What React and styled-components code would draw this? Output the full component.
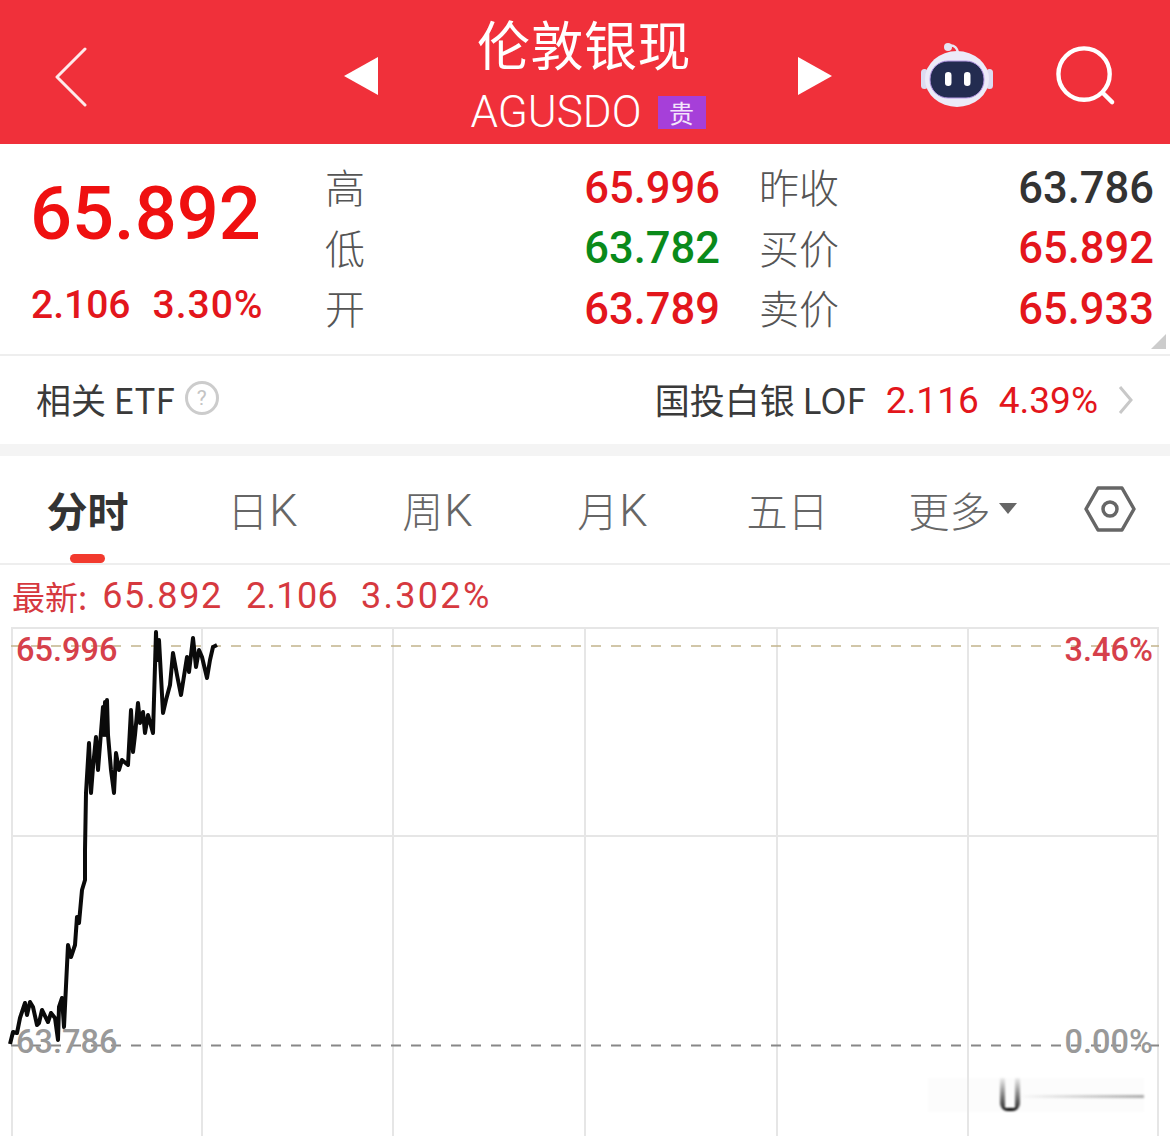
import React from 'react';
import styled, { createGlobalStyle } from 'styled-components';

const CJK = '"Noto Sans CJK SC", sans-serif';
const NUM = 'Roboto, "Noto Sans CJK SC", sans-serif';

const stats = [
  { label: '高', value: '65.996', color: '#e3161c', label2: '昨收', value2: '63.786', color2: '#333' },
  { label: '低', value: '63.782', color: '#0a8a1a', label2: '买价', value2: '65.892', color2: '#e3161c' },
  { label: '开', value: '63.789', color: '#e3161c', label2: '卖价', value2: '65.933', color2: '#e3161c' },
];

const priceLine =
  'M10 1044 L13 1032 L17 1033 L20 1018 L25 1003 L27 1015 L30 1002 L33 1007 L37 1025 L39 1023 L42 1010 L48 1022 L51 1013 L55 1018 L58 1040 L59 1007 L62 998 L64 1027 L68 945 L71 957 L75 945 L77 917 L79 923 L82 890 L85 880 L85 850 L86 793 L89 743 L91 793 L93 767 L96 737 L98 770 L103 707 L104 735 L105 702 L106 735 L107 700 L108 735 L111 770 L114 793 L116 753 L119 770 L122 760 L128 765 L131 710 L133 752 L135 735 L138 703 L140 723 L143 712 L145 733 L148 715 L150 722 L153 733 L156 632 L157 660 L159 640 L163 713 L166 700 L170 685 L173 653 L177 675 L181 695 L187 657 L189 672 L193 638 L196 667 L199 650 L202 657 L207 678 L210 660 L213 647 L217 645';

const App = () => (
  <Page>
    <GlobalStyle />
    <Header>
      <BackIcon viewBox="0 0 34 60">
        <path d="M31 2 L3 30 L31 58" fill="none" stroke="#fff" strokeWidth="3" strokeLinecap="round" strokeLinejoin="round" opacity="0.9" />
      </BackIcon>
      <Triangle viewBox="0 0 34 38">
        <path d="M0 19 L34 0 L34 38 Z" fill="#fff" />
      </Triangle>
      <TitleBlock>
        <Title>伦敦银现</Title>
        <SubRow>
          <Code>AGUSDO</Code>
          <Badge>贵</Badge>
        </SubRow>
      </TitleBlock>
      <Triangle viewBox="0 0 34 38">
        <path d="M34 19 L0 0 L0 38 Z" fill="#fff" />
      </Triangle>
      <RobotIcon viewBox="0 0 72 66">
        <path d="M27 4 C33 2 37 6 37 13" fill="none" stroke="#e9e6f4" strokeWidth="2.5" />
        <circle cx="27" cy="5" r="4" fill="#e6e3f2" />
        <rect x="0" y="27" width="7" height="20" rx="3.5" fill="#dcdcf0" />
        <rect x="65" y="27" width="7" height="20" rx="3.5" fill="#dcdcf0" />
        <ellipse cx="36" cy="37" rx="32" ry="28" fill="#ecebf8" />
        <rect x="9" y="19" width="54" height="37" rx="18" fill="#232c50" stroke="#b79ae6" strokeWidth="1" />
        <rect x="24" y="30" width="6.5" height="14" rx="3.2" fill="#fff" />
        <rect x="43" y="30" width="6.5" height="14" rx="3.2" fill="#fff" />
      </RobotIcon>
      <SearchIcon viewBox="0 0 62 62">
        <circle cx="29" cy="29" r="26.5" fill="none" stroke="#fff" strokeWidth="4.5" />
        <path d="M49 49 L58 58" stroke="#fff" strokeWidth="4.5" strokeLinecap="round" />
      </SearchIcon>
    </Header>

    <Quote>
      <PriceBox>
        <Price>65.892</Price>
        <Change>
          <span>2.106</span>
          <Spaced spacing={1}>3.30%</Spaced>
        </Change>
      </PriceBox>
      <StatGrid>
        {stats.map(s => (
          <React.Fragment key={s.label}>
            <StatLabel>{s.label}</StatLabel>
            <StatValue color={s.color}>{s.value}</StatValue>
            <StatLabel>{s.label2}</StatLabel>
            <StatValue color={s.color2}>{s.value2}</StatValue>
          </React.Fragment>
        ))}
      </StatGrid>
      <Corner />
    </Quote>

    <EtfRow>
      <EtfTitle>相关 ETF</EtfTitle>
      <Help>?</Help>
      <EtfName>国投白银 LOF</EtfName>
      <EtfNum>2.116</EtfNum>
      <EtfNum>4.39%</EtfNum>
      <EtfArrow viewBox="0 0 16 30">
        <path d="M2 2 L13 15 L2 28" fill="none" stroke="#c8c8c8" strokeWidth="3" />
      </EtfArrow>
    </EtfRow>

    <Band />

    <Tabs>
      <Tab active>
        分时
        <TabMark />
      </Tab>
      <Tab>日<KLetter>K</KLetter></Tab>
      <Tab>周<KLetter>K</KLetter></Tab>
      <Tab>月<KLetter>K</KLetter></Tab>
      <Tab>五日</Tab>
      <Tab>
        更多
        <MoreCaret />
      </Tab>
      <Gear viewBox="0 0 52 46">
        <path d="M14 2 H38 L50 23 L38 44 H14 L2 23 Z" fill="none" stroke="#666" strokeWidth="3.5" strokeLinejoin="round" />
        <circle cx="26" cy="23" r="7" fill="none" stroke="#666" strokeWidth="3.5" />
      </Gear>
    </Tabs>

    <Latest>
      <LatestTag>最新:</LatestTag>
      <Spaced spacing={1.7}>65.892</Spaced>
      <Spaced spacing={0.3}>2.106</Spaced>
      <Spaced spacing={2.3}>3.302%</Spaced>
    </Latest>

    <Chart>
      <svg width="1170" height="509" viewBox="0 627 1170 509">
        <g stroke="#e6e6e6" strokeWidth="2" fill="none">
          <path d="M11 628 H1159 M11 836 H1159" />
          <path d="M12 627 V1136 M202 627 V1136 M393 627 V1136 M585 627 V1136 M777 627 V1136 M968 627 V1136 M1158 627 V1136" />
        </g>
        <path d="M11 646 H1159" stroke="#c2b48c" strokeWidth="1.5" strokeDasharray="10 10" />
        <path d="M11 1045.5 H1159" stroke="#888" strokeWidth="2" strokeDasharray="10 10" />
        <path d={priceLine} fill="none" stroke="#0a0a0a" strokeWidth="4" strokeLinejoin="round" />
      </svg>
      <AxisLabel side="left" top={2} tone="up">65.996</AxisLabel>
      <AxisLabel side="right" top={2} tone="up">3.46%</AxisLabel>
      <AxisLabel side="left" top={394} tone="flat">63.786</AxisLabel>
      <AxisLabel side="right" top={394} tone="flat">0.00%</AxisLabel>
      <Watermark>
        <WatermarkBar />
        <WatermarkCup />
      </Watermark>
    </Chart>
  </Page>
);

const GlobalStyle = createGlobalStyle`
  html, body {
    margin: 0;
    padding: 0;
    background: #fff;
  }
`;

const Page = styled.div`
  width: 1170px;
  height: 1136px;
  overflow: hidden;
  background: #fff;
  font-family: ${CJK};
`;

const Header = styled.header`
  height: 144px;
  background: #f0303a;
  display: flex;
  align-items: center;
  padding-left: 54px;
  box-sizing: border-box;
`;

const BackIcon = styled.svg`
  width: 34px;
  height: 60px;
  margin-right: 256px;
  margin-top: 9px;
`;

const Triangle = styled.svg`
  width: 34px;
  height: 38px;
  margin-top: 8px;
  flex: none;
`;

const TitleBlock = styled.div`
  width: 420px;
  display: flex;
  flex-direction: column;
  align-items: center;
  color: #fff;
  margin-top: 3px;
`;

const Title = styled.div`
  font-size: 53px;
  line-height: 62px;
  margin-left: -8px;
  letter-spacing: 0.5px;
`;

const SubRow = styled.div`
  display: flex;
  align-items: center;
  gap: 16px;
  height: 46px;
  margin-top: 15px;
`;

const Code = styled.div`
  font-family: Roboto, sans-serif;
  font-weight: 300;
  font-size: 44px;
`;

const Badge = styled.div`
  width: 48px;
  height: 33px;
  background: #a63fd9;
  font-size: 25px;
  line-height: 33px;
  text-align: center;
  color: #f4e6fb;
`;

const RobotIcon = styled.svg`
  width: 72px;
  height: 66px;
  margin-left: 89px;
  margin-top: 6px;
  flex: none;
`;

const SearchIcon = styled.svg`
  width: 60px;
  height: 60px;
  margin-left: 63px;
  margin-top: 8px;
  flex: none;
`;

const Quote = styled.section`
  position: relative;
  height: 212px;
  display: flex;
  box-sizing: border-box;
  border-bottom: 2px solid #eee;
`;

const PriceBox = styled.div`
  width: 325px;
  padding-left: 30px;
  box-sizing: border-box;
  flex: none;
`;

const Price = styled.div`
  font-family: ${NUM};
  font-weight: 500;
  font-size: 74px;
  line-height: 80px;
  color: #ef1010;
  margin-top: 30px;
`;

const Change = styled.div`
  display: flex;
  gap: 22px;
  padding-left: 1px;
  font-family: ${NUM};
  font-weight: 500;
  font-size: 39px;
  line-height: 46px;
  color: #e3161c;
  margin-top: 28px;
`;

const Spaced = styled.span`
  letter-spacing: ${p => p.spacing}px;
`;

const StatGrid = styled.div`
  display: grid;
  grid-template-columns: 60px 335px 79px 355px;
  grid-auto-rows: 60.5px;
  padding-top: 14px;
  align-items: center;
`;

const StatLabel = styled.div`
  font-size: 40px;
  line-height: 56px;
  margin-top: -4px;
  color: #555;
  font-weight: 300;
  &:nth-child(4n + 3) {
    margin-left: 39px;
    white-space: nowrap;
  }
`;

const StatValue = styled.div`
  font-family: ${NUM};
  font-weight: 500;
  font-size: 43.5px;
  text-align: right;
  color: ${p => p.color};
`;

const Corner = styled.div`
  position: absolute;
  right: 4px;
  bottom: 5px;
  width: 0;
  height: 0;
  border-left: 15px solid transparent;
  border-bottom: 15px solid #ccc;
`;

const EtfRow = styled.section`
  height: 88px;
  display: flex;
  align-items: center;
  padding: 0 0 4px 36px;
  box-sizing: border-box;
`;

const EtfTitle = styled.div`
  font-size: 35px;
  color: #3a3a3a;
`;

const Help = styled.div`
  width: 28px;
  height: 28px;
  margin-left: 10px;
  border: 3px solid #ccc;
  border-radius: 50%;
  color: #c4c4c4;
  font: 21px/28px Roboto, sans-serif;
  text-align: center;
`;

const EtfName = styled.div`
  font-size: 35px;
  color: #3a3a3a;
  margin-left: auto;
`;

const EtfNum = styled.div`
  font-family: ${NUM};
  font-size: 37px;
  color: #e3161c;
  margin: 4px 0 0 20px;
`;

const EtfArrow = styled.svg`
  width: 16px;
  height: 30px;
  margin: 4px 36px 0 20px;
`;

const Band = styled.div`
  height: 12px;
  background: #f4f4f4;
`;

const Tabs = styled.nav`
  height: 109px;
  display: flex;
  border-bottom: 2px solid #eee;
  box-sizing: border-box;
`;

const Tab = styled.div`
  position: relative;
  width: 175px;
  flex: none;
  display: flex;
  align-items: center;
  justify-content: center;
  padding-bottom: 2px;
  box-sizing: border-box;
  font-size: 41px;
  font-weight: ${p => (p.active ? 700 : 300)};
  color: ${p => (p.active ? '#333' : '#666')};
`;

const KLetter = styled.span`
  font-family: Roboto, sans-serif;
  font-weight: 300;
  font-size: 45px;
  margin: 3px 0 0 1px;
`;

const TabMark = styled.span`
  position: absolute;
  left: 70px;
  bottom: 0;
  width: 35px;
  height: 9px;
  border-radius: 5px;
  background: #f23a2e;
`;

const MoreCaret = styled.span`
  width: 0;
  height: 0;
  margin-left: 8px;
  border-left: 9px solid transparent;
  border-right: 9px solid transparent;
  border-top: 11px solid #666;
`;

const Gear = styled.svg`
  width: 52px;
  height: 46px;
  align-self: center;
  margin-left: 34px;
  margin-bottom: 2px;
`;

const Latest = styled.div`
  height: 62px;
  padding-left: 12px;
  display: flex;
  align-items: center;
  gap: 23px;
  font-family: ${NUM};
  font-size: 36px;
  color: #d6393f;
`;

const LatestTag = styled.span`
  font-family: ${CJK};
  font-size: 33px;
  margin-right: -8px;
`;

const Chart = styled.div`
  position: relative;
  height: 509px;
  svg {
    display: block;
  }
`;

const AxisLabel = styled.div`
  position: absolute;
  top: ${p => p.top}px;
  ${p => (p.side === 'left' ? 'left: 16px;' : 'right: 17px;')}
  font-family: ${NUM};
  font-weight: 500;
  font-size: 32.5px;
  line-height: 42px;
  color: ${p => (p.tone === 'up' ? '#d6404a' : '#999')};
`;

const Watermark = styled.div`
  position: absolute;
  left: 928px;
  top: 451px;
  width: 216px;
  height: 34px;
  background: rgba(235, 235, 235, 0.15);
  filter: blur(1px);
`;

const WatermarkBar = styled.div`
  position: absolute;
  left: 90px;
  right: 0;
  top: 17px;
  height: 3px;
  background: linear-gradient(to right, transparent, #aaa);
`;

const WatermarkCup = styled.div`
  position: absolute;
  left: 72px;
  top: 0;
  width: 20px;
  height: 33px;
  box-sizing: border-box;
  background:
    linear-gradient(to top, #000 0, #000 3px, transparent 3px),
    linear-gradient(to top, #222, rgba(100, 100, 100, 0.1)) left / 5px 100% no-repeat,
    linear-gradient(to top, #222, rgba(100, 100, 100, 0.1)) right / 5px 100% no-repeat;
  border-radius: 0 0 8px 8px;
`;

export default App;
